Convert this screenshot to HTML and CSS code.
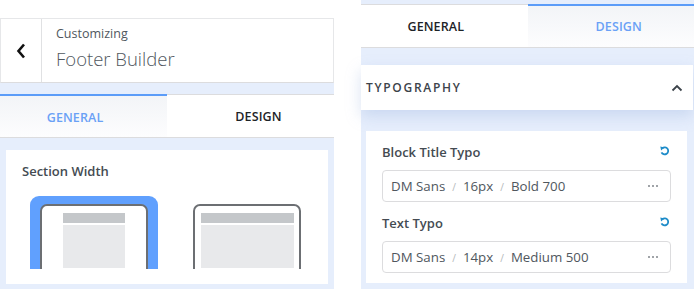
FILE: index.html
```html
<!DOCTYPE html>
<html>
<head>
<meta charset="utf-8">
<link rel="stylesheet" href="styles.css">
</head>
<body>
<div class="page">
  <section class="panel left">
    <div class="header">
      <div class="back">
        <svg width="10" height="16" viewBox="0 0 10 16"><path d="M8 1.5 L2.5 8 L8 14.5" fill="none" stroke="#111" stroke-width="2.6"/></svg>
      </div>
      <div class="titles">
        <div class="sub">Customizing</div>
        <div class="title">Footer Builder</div>
      </div>
    </div>
    <div class="body">
      <div class="tabs">
        <div class="tab first active">GENERAL</div>
        <div class="tab second">DESIGN</div>
      </div>
      <div class="card width-card">
        <div class="label">Section Width</div>
        <div class="layouts">
          <div class="layout selected">
            <div class="frame">
              <div class="bar narrow"></div>
              <div class="content narrow"></div>
            </div>
          </div>
          <div class="layout">
            <div class="frame">
              <div class="bar"></div>
              <div class="content"></div>
            </div>
          </div>
        </div>
      </div>
    </div>
  </section>

  <section class="panel right">
    <div class="tabs">
      <div class="tab first">GENERAL</div>
      <div class="tab second active">DESIGN</div>
    </div>
    <div class="group-head">
      <span class="group-title">TYPOGRAPHY</span>
      <svg width="12" height="8" viewBox="0 0 12 8"><path d="M1.5 6.5 L6 2 L10.5 6.5" fill="none" stroke="#3c434a" stroke-width="1.8"/></svg>
    </div>
    <div class="card typo-card">
      <div class="row-label">
        <span class="label">Block Title Typo</span>
        <svg class="reset" width="10" height="10" viewBox="0 0 10 10"><path d="M2.4 2.2 A3.5 3.5 0 1 1 1.5 6.3" fill="none" stroke="#1e8cc9" stroke-width="1.8"/><path d="M0.3 0.5 L4.4 1.4 L1.1 4.6 Z" fill="#1e8cc9"/></svg>
      </div>
      <div class="field">
        <span>DM Sans</span><i>/</i><span>16px</span><i>/</i><span>Bold 700</span>
        <b class="dots"><em></em><em></em><em></em></b>
      </div>
      <div class="row-label second">
        <span class="label">Text Typo</span>
        <svg class="reset" width="10" height="10" viewBox="0 0 10 10"><path d="M2.4 2.2 A3.5 3.5 0 1 1 1.5 6.3" fill="none" stroke="#1e8cc9" stroke-width="1.8"/><path d="M0.3 0.5 L4.4 1.4 L1.1 4.6 Z" fill="#1e8cc9"/></svg>
      </div>
      <div class="field">
        <span>DM Sans</span><i>/</i><span>14px</span><i>/</i><span>Medium 500</span>
        <b class="dots"><em></em><em></em><em></em></b>
      </div>
    </div>
  </section>
</div>
</body>
</html>
```
FILE: styles.css
```css
* { box-sizing: border-box; }
html, body { margin: 0; padding: 0; background: #fff; }
body { font-family: "Open Sans", "Liberation Sans", sans-serif; color: #3c434a; }

.page {
  display: flex;
  gap: 27px;
  width: 694px;
  height: 289px;
  overflow: hidden;
}

.panel { width: 334px; flex: none; }
.left { padding-top: 18px; display: flex; flex-direction: column; }
.right { width: 333px; background: #e6eefc; padding-top: 4px; }

.header {
  display: flex;
  height: 65px;
  border: 1px solid #e6e7e9;
  border-bottom: 1px solid #dcdcde;
  background: #fff;
}
.back {
  width: 41px;
  border-right: 1px solid #e0e1e3;
  display: flex;
  align-items: center;
  justify-content: center;
}
.titles { padding: 5px 0 0 14px; color: #50575e; }
.sub { font-size: 12.5px; line-height: 19px; }
.title { font-size: 18.5px; font-weight: 300; line-height: 31px; }

.body {
  flex: 1;
  background: #e6eefc;
  padding-top: 11px;
}

.tabs {
  display: grid;
  grid-template-columns: 1fr 1fr;
  height: 44px;
  border-top: 1px solid #dcdcde;
  border-bottom: 1px solid #dcdcde;
  background: #fff;
}
.tab {
  display: flex;
  align-items: center;
  justify-content: center;
  font-size: 12.5px;
  font-weight: 600;
  letter-spacing: 0.1px;
  color: #1d2327;
}
.tab.first { padding-right: 17px; }
.tab.second { padding-left: 16px; }
.tab.active {
  color: #6aa1f6;
  background: linear-gradient(#f2f4f7, #fdfdfe);
  box-shadow: inset 0 2px 0 #5b9cf8;
  margin-top: -1px;
}
.left .tab.active { padding-top: 3px; }
.right .tab.active { padding-top: 2px; }

.card { background: #fff; }
.width-card {
  margin: 12px 6px 0;
  height: 134px;
  padding: 12px 16px 0;
}
.label { font-size: 13px; font-weight: 600; line-height: 18px; color: #444b52; }

.layouts {
  display: flex;
  gap: 25px;
  margin: 16px 0 0 8px;
  height: 73px;
  overflow: hidden;
}
.layout {
  width: 128px;
  height: 90px;
  border-radius: 9px;
  padding: 8px 10px 0;
  flex: none;
}
.layout.selected { background: #60a0fe; }
.frame {
  height: 90px;
  border: 2.5px solid #6c6f73;
  border-radius: 7px;
  background: #fff;
  padding: 6.5px 5.5px 0;
}
.bar { height: 10px; background: #c4c7ca; margin-bottom: 2px; }
.content { height: 43px; background: #e8e9eb; }
.narrow { width: 62px; margin-left: auto; margin-right: auto; }

.group-head {
  margin-top: 17px;
  height: 45px;
  background: #fff;
  width: 332px;
  display: flex;
  align-items: center;
  justify-content: space-between;
  padding: 0 10px 0 5px;
  box-shadow: 0 6px 14px rgba(150, 175, 220, 0.35);
}
.group-title {
  font-size: 12px;
  font-weight: 600;
  letter-spacing: 1.7px;
  color: #3c434a;
}

.typo-card {
  margin: 21px 7px 0 5px;
  padding: 11px 16px 10px;
  height: 152px;
}
.row-label {
  display: flex;
  justify-content: space-between;
  align-items: center;
  height: 20px;
  padding-right: 1px;
}
.row-label .reset { margin-top: -3px; }
.row-label.second { margin-top: 11px; }
.field {
  margin-top: 8px;
  height: 32px;
  border: 1px solid #dcdcde;
  border-radius: 4px;
  display: flex;
  align-items: center;
  padding: 0 12px 0 8px;
  font-size: 13.3px;
  color: #50575e;
}
.field i {
  font-style: normal;
  font-size: 10px;
  color: #b5b8bb;
  margin: 2px 7px 0;
}
.dots { margin-left: auto; display: flex; gap: 1.5px; }
.dots em { width: 2.5px; height: 2px; background: #a0a4a8; display: block; }
```
